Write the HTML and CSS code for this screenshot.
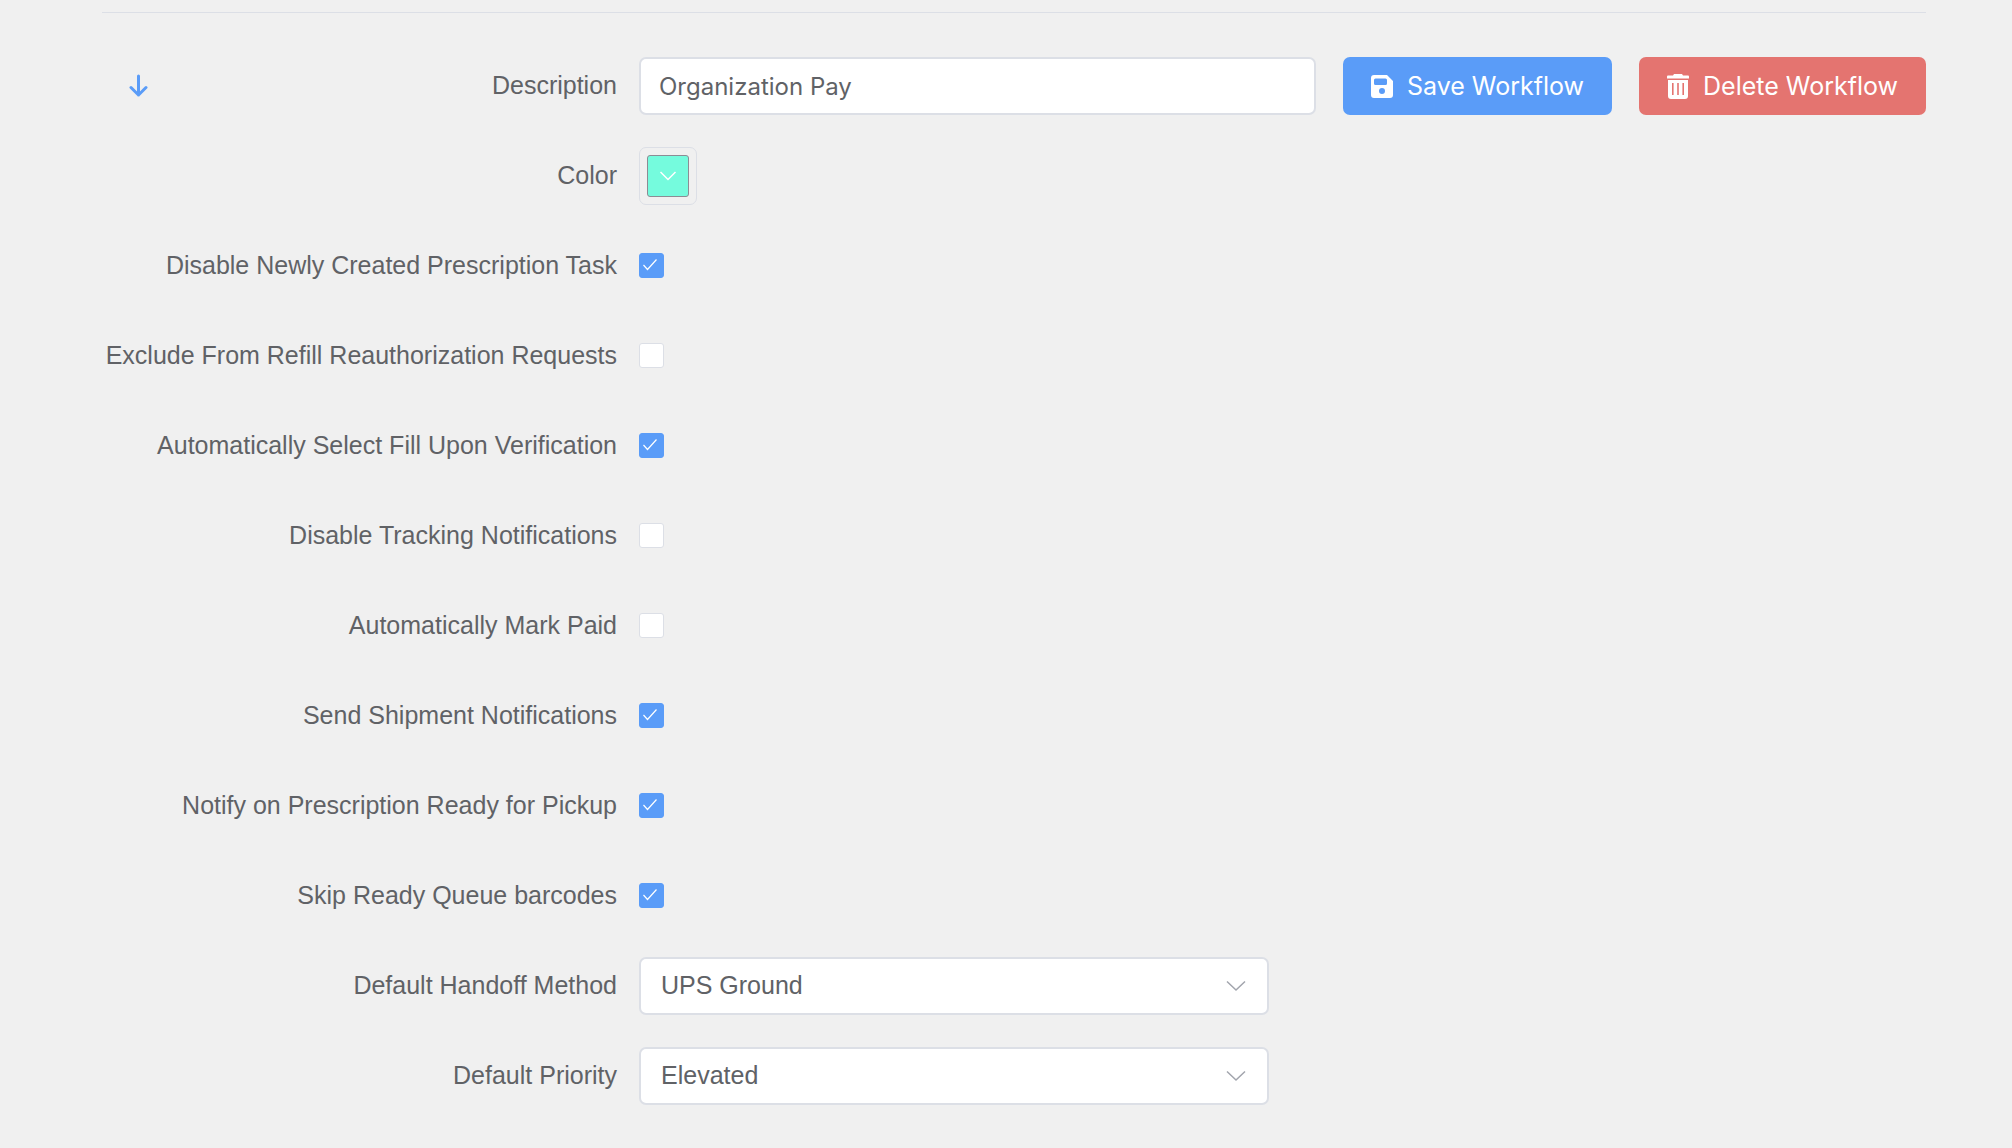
FILE: index.html
```html
<!DOCTYPE html>
<html lang="en">
<head>
<meta charset="utf-8">
<title>Workflow</title>
<link rel="stylesheet" href="styles.css">
</head>
<body>
<form class="workflow">
  <div class="row">
    <div class="lead">
      <button type="button" class="move" aria-label="Move down">
        <svg width="20" height="26" viewBox="0 0 20 26"><path d="M10.500 3v19M3 14.500l7.500 7.500 7.500-7.500" fill="none" stroke="currentColor" stroke-width="3" stroke-linecap="round" stroke-linejoin="round"/></svg>
      </button>
      <label class="label" for="description">Description</label>
    </div>
    <div class="header-controls">
      <input class="text-input" id="description" type="text" value="Organization Pay">
      <button type="button" class="button button-save">
        <svg width="22" height="23" viewBox="0 0 22 23"><path fill="currentColor" fill-rule="evenodd" d="M3 0h13l6 6v14a3 3 0 0 1-3 3H3a3 3 0 0 1-3-3V3a3 3 0 0 1 3-3zM4.500 3.500A1.500 1.500 0 0 0 3 5v3.500A1.500 1.500 0 0 0 4.500 10h10A1.500 1.500 0 0 0 16 8.500V5a1.500 1.500 0 0 0-1.500-1.500zM11 13a3 3 0 1 0 0 6 3 3 0 0 0 0-6z"/></svg>
        <span>Save Workflow</span>
      </button>
      <button type="button" class="button button-delete">
        <svg width="22" height="25" viewBox="0 0 22 25"><path fill="currentColor" fill-rule="evenodd" d="M7 0h8l1 1.500h5a1 1 0 0 1 1 1V4.500H0V2.500a1 1 0 0 1 1-1h5zM1 6h20v16a3 3 0 0 1-3 3H4a3 3 0 0 1-3-3zM5 9v12h1.600V9zM10.200 9v12h1.600V9zM15.400 9v12H17V9z"/></svg>
        <span>Delete Workflow</span>
      </button>
    </div>
  </div>
  <div class="row">
    <label class="label" for="color">Color</label>
    <button type="button" class="color-picker" id="color">
      <span class="swatch"><svg width="18" height="10" viewBox="0 0 18 10"><path d="M1.500 1l7.500 7.500L16.500 1" fill="none" stroke="currentColor" stroke-width="1.500"/></svg></span>
    </button>
  </div>
  <div class="row">
    <label class="label" for="disable-task">Disable Newly Created Prescription Task</label>
    <input class="checkbox" id="disable-task" type="checkbox" checked>
  </div>
  <div class="row">
    <label class="label" for="exclude-refill">Exclude From Refill Reauthorization Requests</label>
    <input class="checkbox" id="exclude-refill" type="checkbox">
  </div>
  <div class="row">
    <label class="label" for="auto-fill">Automatically Select Fill Upon Verification</label>
    <input class="checkbox" id="auto-fill" type="checkbox" checked>
  </div>
  <div class="row">
    <label class="label" for="disable-tracking">Disable Tracking Notifications</label>
    <input class="checkbox" id="disable-tracking" type="checkbox">
  </div>
  <div class="row">
    <label class="label" for="mark-paid">Automatically Mark Paid</label>
    <input class="checkbox" id="mark-paid" type="checkbox">
  </div>
  <div class="row">
    <label class="label" for="shipment">Send Shipment Notifications</label>
    <input class="checkbox" id="shipment" type="checkbox" checked>
  </div>
  <div class="row">
    <label class="label" for="pickup">Notify on Prescription Ready for Pickup</label>
    <input class="checkbox" id="pickup" type="checkbox" checked>
  </div>
  <div class="row">
    <label class="label" for="skip-queue">Skip Ready Queue barcodes</label>
    <input class="checkbox" id="skip-queue" type="checkbox" checked>
  </div>
  <div class="row">
    <label class="label" for="handoff">Default Handoff Method</label>
    <select class="select" id="handoff"><option>UPS Ground</option></select>
  </div>
  <div class="row">
    <label class="label" for="priority">Default Priority</label>
    <select class="select" id="priority"><option>Elevated</option></select>
  </div>
</form>
</body>
</html>
```

FILE: styles.css
```css
* {
  box-sizing: border-box;
}

body {
  margin: 0;
  padding: 12px 86px 43px 102px;
  background: #f0f0f0;
  color: #606266;
  font-family: "Liberation Sans", Arial, sans-serif;
  font-size: 25px;
  line-height: 30px;
}

button,
input,
select {
  margin: 0;
  font: inherit;
  color: inherit;
}

button {
  cursor: pointer;
}

.workflow {
  display: flex;
  flex-direction: column;
  gap: 32px;
  padding-top: 44px;
  border-top: 1px solid #dcdfe6;
}

.row {
  display: grid;
  grid-template-columns: 515px minmax(0, 1fr);
  column-gap: 22px;
  align-items: center;
  min-height: 58px;
}

.lead {
  display: flex;
  align-items: center;
  justify-content: space-between;
  padding-left: 26px;
}

.move {
  display: flex;
  padding: 0;
  border: 0;
  background: none;
  color: #5a9cf8;
}

.label {
  padding-bottom: 2px;
  text-align: right;
  white-space: nowrap;
}

.header-controls {
  display: flex;
  gap: 27px;
}

.text-input {
  flex: 1;
  min-width: 0;
  height: 58px;
  padding: 0 18px;
  border: 2px solid #dcdfe6;
  border-radius: 7px;
  background: #fff;
  font-family: Inter, sans-serif;
  font-size: 24px;
}

.button {
  display: flex;
  align-items: center;
  gap: 14px;
  height: 58px;
  padding: 0 28px;
  border: 0;
  border-radius: 7px;
  color: #fff;
  font-family: Inter, sans-serif;
  font-size: 25px;
  white-space: nowrap;
}

.button-save {
  background: #5a9cf8;
}

.button-delete {
  background: #e47470;
}

.color-picker {
  width: 58px;
  height: 58px;
  padding: 7px;
  border: 1px solid #dcdfe6;
  border-radius: 7px;
  background: none;
}

.swatch {
  display: flex;
  align-items: center;
  justify-content: center;
  height: 42px;
  border: 1px solid #8c8c94;
  border-radius: 3px;
  background: #75fbdd;
  color: #fff;
}

.checkbox {
  appearance: none;
  width: 25px;
  height: 25px;
  margin-bottom: 1px;
  border: 1px solid #dcdfe6;
  border-radius: 3px;
  background: #fff;
}

.checkbox:checked {
  border-color: #5a9cf8;
  background: #5a9cf8 url("data:image/svg+xml,%3Csvg xmlns='http://www.w3.org/2000/svg' width='23' height='23'%3E%3Cpath d='M3.500 11l4 4.500L16.500 5.500' fill='none' stroke='white' stroke-width='1.200'/%3E%3C/svg%3E") center no-repeat;
}

.select {
  appearance: none;
  width: 100%;
  max-width: 630px;
  height: 58px;
  padding: 0 60px 2px 20px;
  border: 2px solid #dcdfe6;
  border-radius: 7px;
  background: #fff url("data:image/svg+xml,%3Csvg xmlns='http://www.w3.org/2000/svg' width='20' height='12'%3E%3Cpath d='M1 1.500l9 8.500L19 1.500' fill='none' stroke='%23a2a5ad' stroke-width='1.500'/%3E%3C/svg%3E") right 21px center no-repeat;
}
```
